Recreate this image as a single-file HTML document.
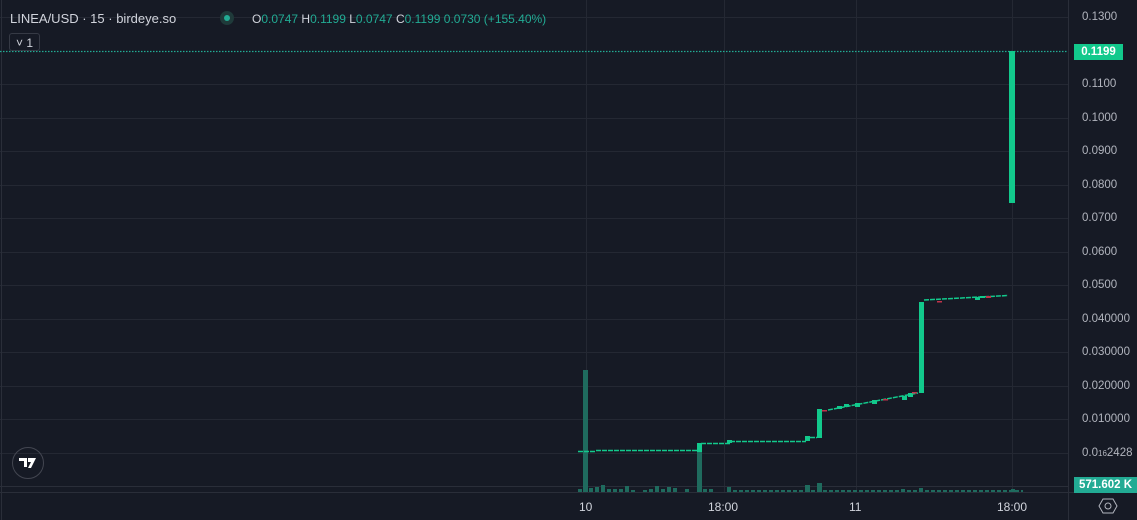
<!DOCTYPE html>
<html><head><meta charset="utf-8"><style>
html,body{margin:0;padding:0;background:#161a25;width:1137px;height:520px;overflow:hidden;font-family:"Liberation Sans",sans-serif}
.t{position:absolute;white-space:nowrap}
.ax{position:absolute;left:1082px;color:#b2b5be;font-size:11.5px}
</style></head><body>
<svg width="1137" height="520" style="position:absolute;left:0;top:0">
<g stroke="#242833" stroke-width="1">
<line x1="0" y1="17.5" x2="1068" y2="17.5"/><line x1="0" y1="84.5" x2="1068" y2="84.5"/>
<line x1="0" y1="118.5" x2="1068" y2="118.5"/><line x1="0" y1="151.5" x2="1068" y2="151.5"/>
<line x1="0" y1="185.5" x2="1068" y2="185.5"/><line x1="0" y1="218.5" x2="1068" y2="218.5"/>
<line x1="0" y1="252.5" x2="1068" y2="252.5"/><line x1="0" y1="285.5" x2="1068" y2="285.5"/>
<line x1="0" y1="319.5" x2="1068" y2="319.5"/><line x1="0" y1="352.5" x2="1068" y2="352.5"/>
<line x1="0" y1="386.5" x2="1068" y2="386.5"/><line x1="0" y1="419.5" x2="1068" y2="419.5"/>
<line x1="0" y1="453.5" x2="1068" y2="453.5"/>
<line x1="586.5" y1="0" x2="586.5" y2="492"/><line x1="724.5" y1="0" x2="724.5" y2="492"/>
<line x1="856.5" y1="0" x2="856.5" y2="492"/><line x1="1012.5" y1="0" x2="1012.5" y2="492"/>
</g>
<line x1="0" y1="486.5" x2="1068" y2="486.5" stroke="#2a2e39"/>
<line x1="0" y1="492.5" x2="1137" y2="492.5" stroke="#2a2e39"/>
<line x1="1068.5" y1="0" x2="1068.5" y2="520" stroke="#2a2e39"/>
<line x1="1.5" y1="0" x2="1.5" y2="520" stroke="#2a2e39"/>
<line x1="0" y1="51.5" x2="1068" y2="51.5" stroke="#22ab94" stroke-width="1.2" stroke-dasharray="1.5 1.5"/>
<!-- volume -->
<g fill="#1f6b5e">
<rect x="578" y="489" width="4" height="3"/><rect x="583" y="370" width="5" height="122"/>
<rect x="589" y="488" width="4" height="4"/><rect x="595" y="487" width="4" height="5"/>
<rect x="601" y="485" width="4" height="7"/><rect x="607" y="489" width="4" height="3"/>
<rect x="613" y="489" width="4" height="3"/><rect x="619" y="489" width="4" height="3"/>
<rect x="625" y="486" width="4" height="6"/><rect x="631" y="490" width="4" height="2"/>
<rect x="643" y="490" width="4" height="2"/><rect x="649" y="489" width="4" height="3"/>
<rect x="655" y="486" width="4" height="6"/><rect x="661" y="489" width="4" height="3"/>
<rect x="667" y="487" width="4" height="5"/><rect x="673" y="488" width="4" height="4"/>
<rect x="685" y="489" width="4" height="3"/><rect x="697" y="443" width="5" height="49"/>
<rect x="703" y="489" width="4" height="3"/><rect x="709" y="489" width="4" height="3"/>
<rect x="727" y="487" width="4" height="5"/><rect x="733" y="490" width="4" height="2"/>
</g>
<line x1="739" y1="491" x2="1023" y2="491" stroke="#1f6b5e" stroke-width="2" stroke-dasharray="4 2"/>
<g fill="#1f6b5e">
<rect x="805" y="485" width="5" height="7"/><rect x="817" y="483" width="5" height="9"/>
<rect x="901" y="489" width="4" height="3"/><rect x="919" y="488" width="4" height="4"/>
<rect x="1011" y="489" width="4" height="3"/>
</g>
<!-- price -->
<g stroke="#12c98c" stroke-width="1.5" stroke-dasharray="5 1" fill="none">
<line x1="578" y1="451.5" x2="596" y2="451.5"/><line x1="596" y1="450.5" x2="697" y2="450.5"/>
<line x1="701" y1="443.5" x2="730" y2="443.5"/><line x1="730" y1="441.5" x2="806" y2="441.5"/>
<line x1="810" y1="437.5" x2="817" y2="437.5"/>
<line x1="828" y1="410" x2="918" y2="393" />
<line x1="924" y1="300" x2="1008" y2="295.5"/>
</g>
<g fill="#12c98c">
<rect x="697" y="443" width="5" height="9"/><rect x="727" y="440" width="5" height="3"/>
<rect x="805" y="436" width="5" height="5"/><rect x="817" y="409" width="5" height="29"/>
<rect x="837" y="406" width="5" height="3"/><rect x="844" y="404" width="5" height="3"/>
<rect x="855" y="403" width="5" height="4"/><rect x="872" y="400" width="5" height="4"/>
<rect x="902" y="396" width="5" height="4"/><rect x="908" y="393" width="5" height="4"/>
<rect x="919" y="302" width="5" height="91"/><rect x="975" y="297" width="5" height="3"/>
<rect x="980" y="296" width="5" height="2"/><rect x="1009" y="51" width="6" height="152"/>
</g>
<g fill="#c2334a"><rect x="822" y="410" width="5" height="1.5"/><rect x="883" y="399" width="5" height="1.5"/><rect x="912" y="392" width="5" height="1.5"/><rect x="937" y="301" width="5" height="1.5"/><rect x="986" y="296" width="5" height="2"/></g>
<circle cx="28" cy="463" r="15.5" fill="none" stroke="#434651" stroke-width="1"/>
<path d="M19 458h8v9h-3v-6h-5z M28 458h8l-5 10h-3l3-6h-3z" fill="#fff"/>
<circle cx="1108" cy="506" r="3" fill="none" stroke="#b2b5be"/>
<path d="M1103 499h10l4 7-4 7h-10l-4-7z" fill="none" stroke="#b2b5be"/>
</svg>
<div class="t" style="left:10px;top:11px;font-size:13px;color:#d1d4dc">LINEA/USD · 15 · birdeye.so</div>
<div class="t" style="left:220px;top:11px;width:14px;height:14px;border-radius:7px;background:#1f3a3a"></div>
<div class="t" style="left:224px;top:15px;width:6px;height:6px;border-radius:3px;background:#22ab94"></div>
<div class="t" style="left:252px;top:12px;font-size:12px;color:#22ab94"><span style="color:#d1d4dc">O</span>0.0747 <span style="color:#d1d4dc">H</span>0.1199 <span style="color:#d1d4dc">L</span>0.0747 <span style="color:#d1d4dc">C</span>0.1199 0.0730 (+155.40%)</div>
<div class="t" style="left:9px;top:33px;width:31px;height:18px;border:1px solid #363a45;border-radius:3px;color:#d1d4dc;font-size:12px;line-height:18px;text-align:center;box-sizing:border-box">˅ 1</div>
<div class="ax" style="top:11px">0.1300</div>
<div class="t" style="left:1074px;top:44px;width:49px;height:16px;background:#12c98c;color:#fff;font-size:11.5px;font-weight:bold;line-height:16px;text-align:center">0.1199</div>
<div class="ax" style="top:78px">0.1100</div><div class="ax" style="top:112px">0.1000</div>
<div class="ax" style="top:145px">0.0900</div><div class="ax" style="top:179px">0.0800</div>
<div class="ax" style="top:212px">0.0700</div><div class="ax" style="top:246px">0.0600</div>
<div class="ax" style="top:279px">0.0500</div><div class="ax" style="top:313px">0.040000</div>
<div class="ax" style="top:346px">0.030000</div><div class="ax" style="top:380px">0.020000</div>
<div class="ax" style="top:413px">0.010000</div><div class="ax" style="top:447px">0.0<span style="font-size:8px">16</span>2428</div>
<div class="t" style="left:1074px;top:477px;width:63px;height:16px;background:#22ab94;color:#fff;font-size:11.5px;font-weight:bold;line-height:16px;text-align:center">571.602 K</div>
<div class="t" style="left:579px;top:500px;font-size:12px;color:#d1d4dc">10</div>
<div class="t" style="left:708px;top:500px;font-size:12px;color:#d1d4dc">18:00</div>
<div class="t" style="left:849px;top:500px;font-size:12px;color:#d1d4dc">11</div>
<div class="t" style="left:997px;top:500px;font-size:12px;color:#d1d4dc">18:00</div>
</body></html>
